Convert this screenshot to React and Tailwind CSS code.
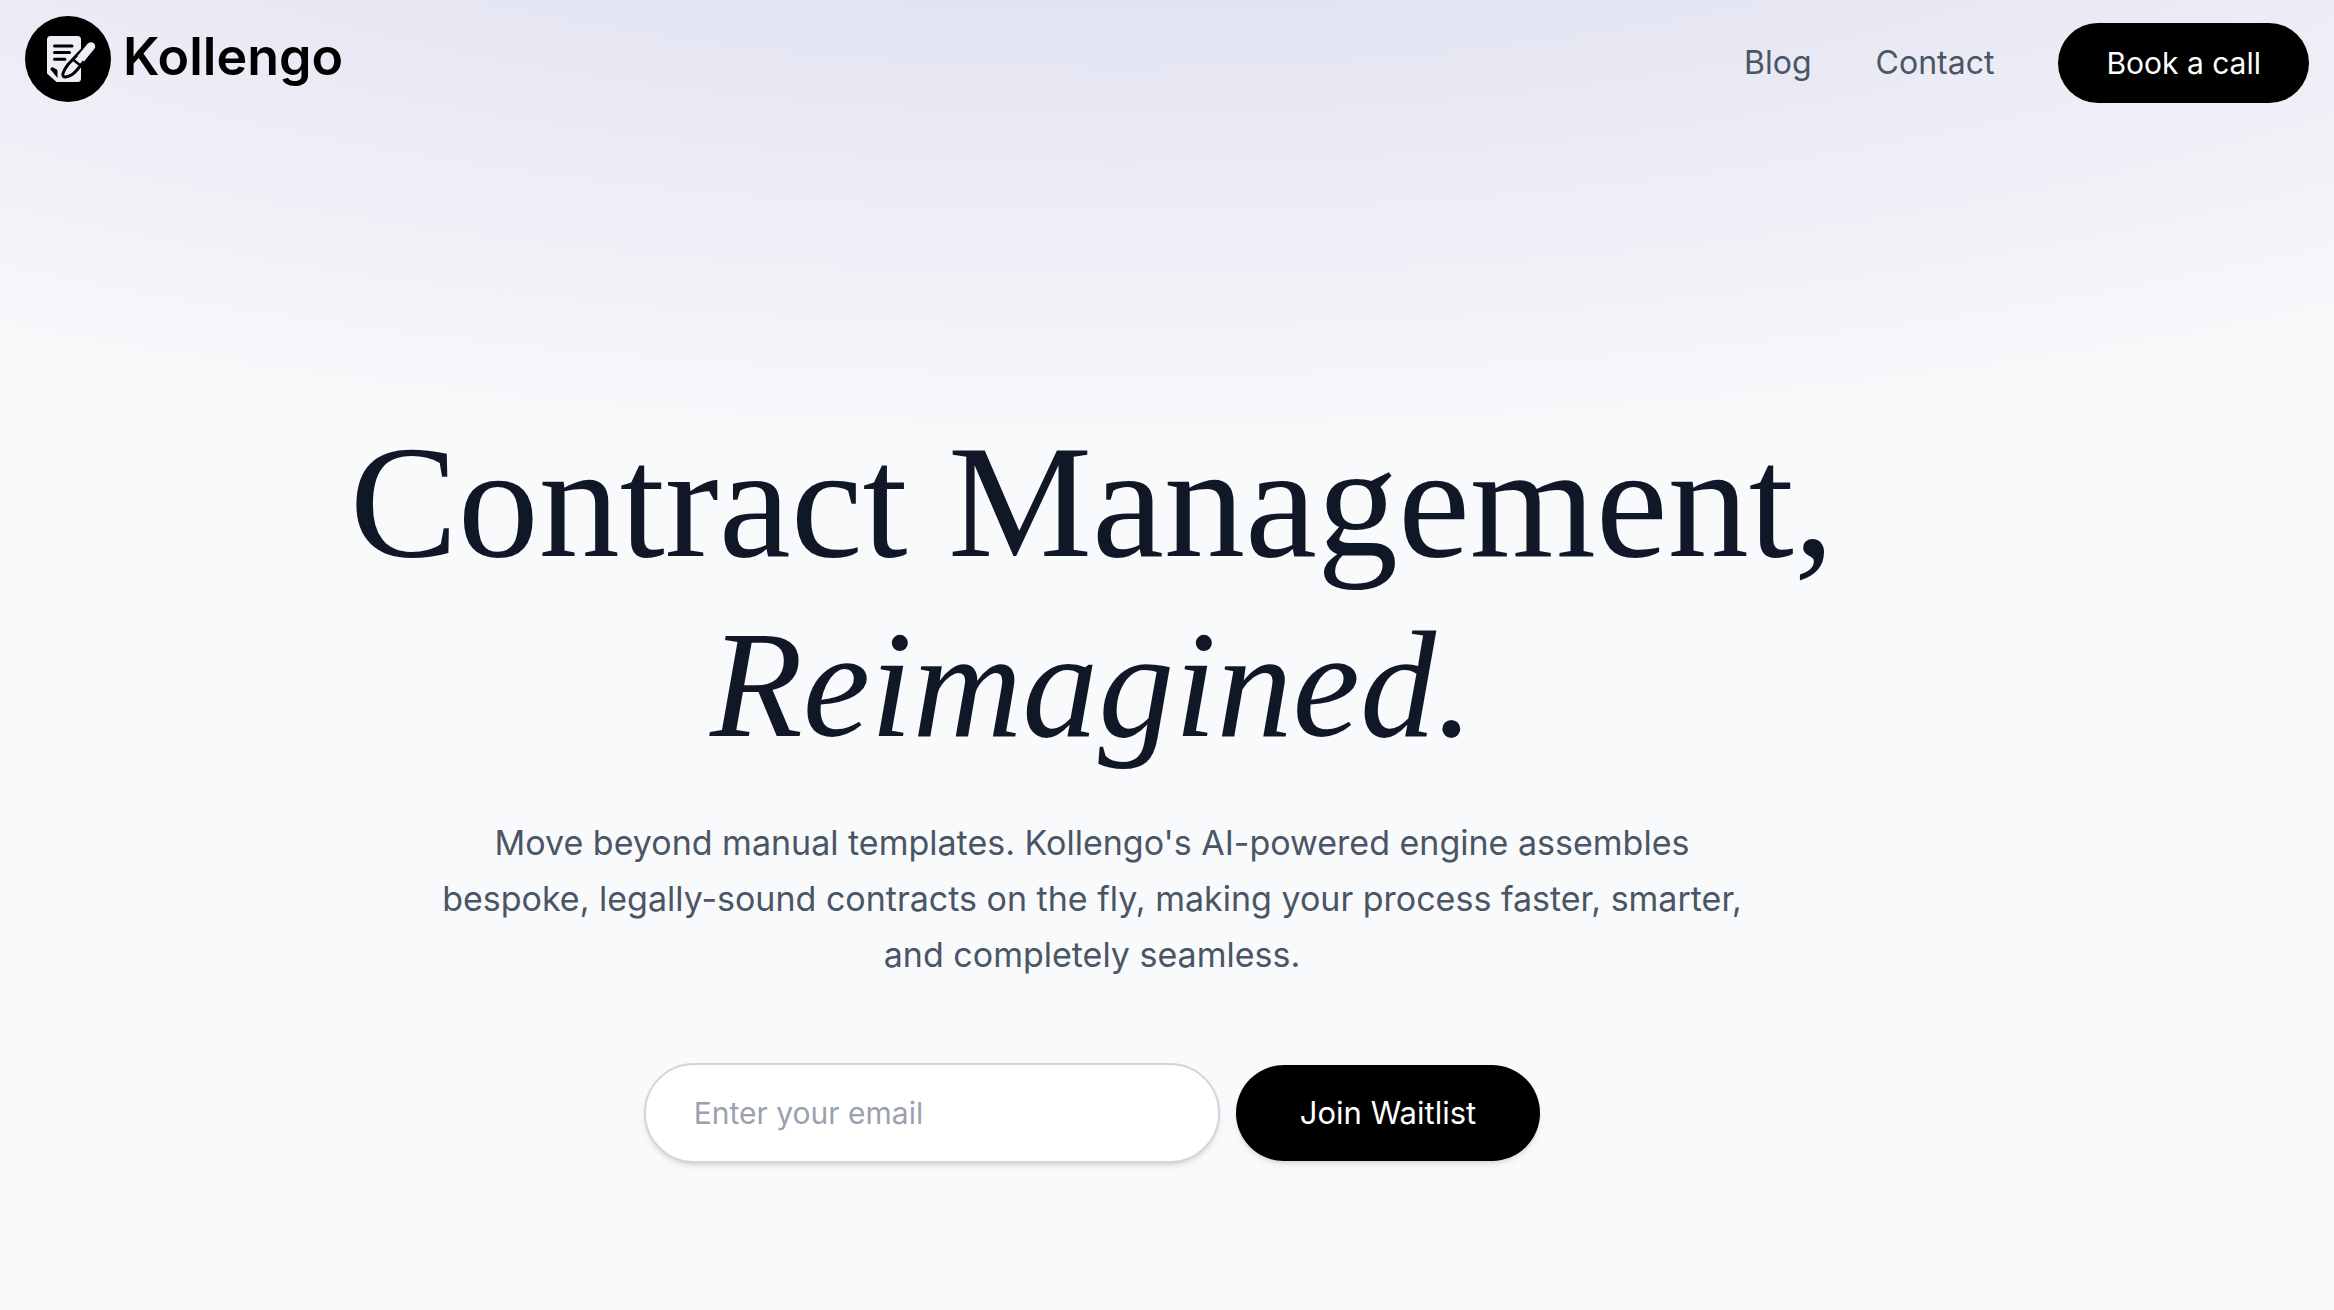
function LogoMark() {
  return (
    <svg viewBox="0 0 86 86" className="size-[86px] shrink-0" aria-hidden="true">
      <circle cx="43" cy="43" r="43" fill="#000" />
      <path
        d="M25.5 20h27a3.5 3.5 0 0 1 3.500 3.500V62.500a3.500 3.500 0 0 1-3.500 3.500H31.500L22 57.500V23.500a3.500 3.500 0 0 1 3.500-3.500Z"
        fill="#eeeef6"
      />
      <path d="M25.500 53.500c0-1.500 1-2.500 2.500-2l3 1.500c1 .5 1.500 1.300 1.500 2.500v6.500Z" fill="#000" />
      <path d="M29.500 30H47M29.500 36.500H44.500M29.500 43.300H40" stroke="#000" strokeWidth="3" strokeLinecap="round" />
      <path
        d="M62.800 27.600a4.200 4.200 0 0 1 6.400 5.500L51.500 54.500c-2.500 3-6.500 6-11 6.500-2 .2-3.200-1.500-2.500-3.600 1-3.400 3-6.400 5-8.900Z"
        fill="#eeeef6"
        stroke="#000"
        strokeWidth="3"
        strokeLinejoin="round"
      />
      <path d="M62.800 27.600a4.200 4.200 0 0 1 6.400 5.500L59 45.500l-6.500-5.600Z" fill="#eeeef6" />
      <path d="M48 43.500l6.500 5.300" stroke="#000" strokeWidth="2.500" strokeLinecap="round" />
    </svg>
  );
}

export default function App() {
  return (
    <div className="min-h-screen bg-gray-50 bg-[radial-gradient(ellipse_100%_770px_at_48%_-300px,rgba(120,119,198,0.29),rgba(249,250,251,0))] font-['Inter',sans-serif] text-gray-600">
      <header className="flex items-start justify-between px-[25px] pt-4">
        <a href="#" className="flex items-center gap-3 text-black">
          <LogoMark />
          <span className="-mt-1 text-[52px] leading-none font-semibold">Kollengo</span>
        </a>
        <nav className="mt-[7px] flex items-center gap-16 text-[32px] leading-[48px]">
          <a href="#blog">Blog</a>
          <a href="#contact">Contact</a>
          <button type="button" className="rounded-full bg-black px-12 py-4 text-[30px] text-white">
            Book a call
          </button>
        </nav>
      </header>

      <main className="flex flex-col items-center pt-[309px] pr-[150px] text-center">
        <h1 className="font-['Liberation_Serif',serif] text-[162px] leading-[180px] text-gray-900">
          Contract Management,
          <br />
          <em className="text-[152px]">Reimagined.</em>
        </h1>
        <p className="mt-10 max-w-[1344px] text-[34px] leading-[56px]">
          Move beyond manual templates. Kollengo's AI-powered engine assembles bespoke, legally-sound contracts on the fly, making your process faster, smarter, and completely seamless.
        </p>
        <form className="mt-20 flex items-center gap-4 text-[30px] leading-[48px]" onSubmit={(e) => e.preventDefault()}>
          <input
            type="email"
            aria-label="Email address"
            placeholder="Enter your email"
            className="h-[100px] w-[576px] rounded-full border-2 border-gray-300 bg-white px-12 shadow-md placeholder:text-gray-400"
          />
          <button type="submit" className="h-24 rounded-full bg-black px-16 text-[31px] text-white shadow-md">
            Join Waitlist
          </button>
        </form>
      </main>
    </div>
  );
}
